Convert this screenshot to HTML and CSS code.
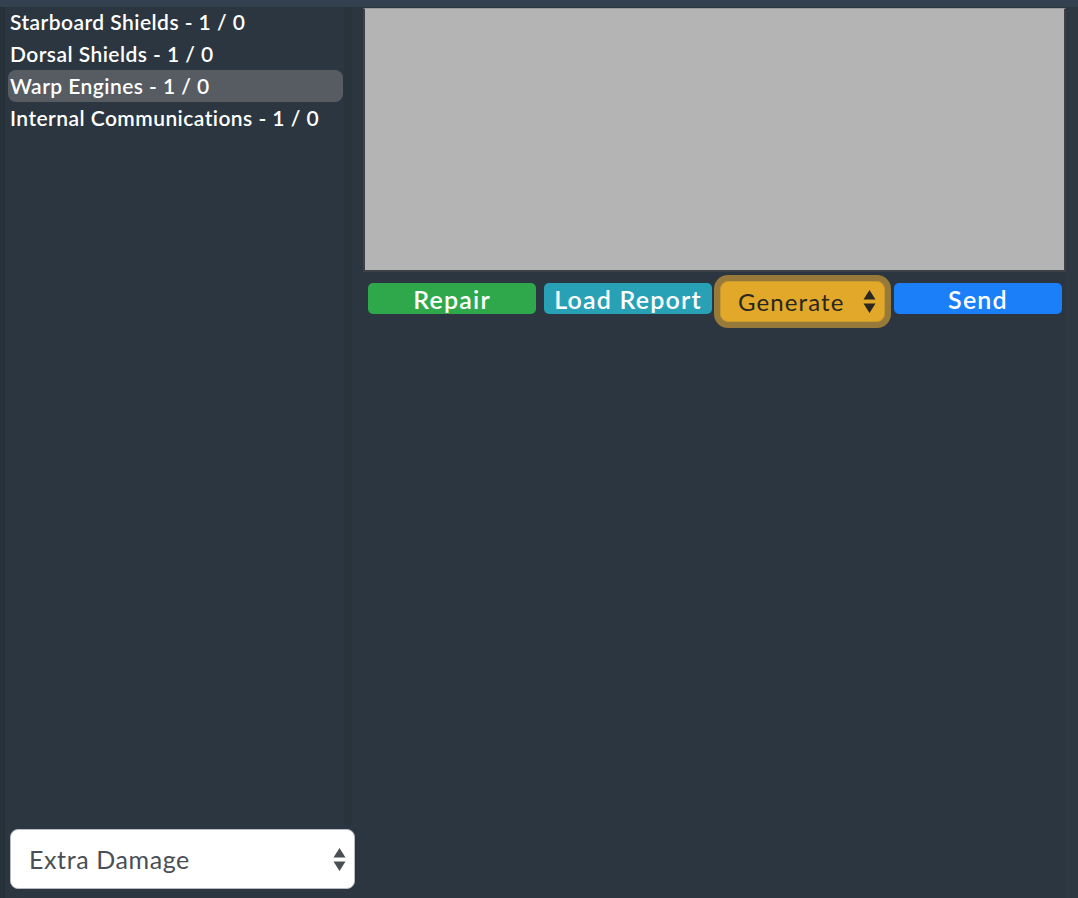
FILE: index.html
```html
<!DOCTYPE html>
<html>
<head>
<meta charset="utf-8">
<link rel="stylesheet" href="styles.css">
</head>
<body>
<div class="topbar"></div>
<div class="main">
  <aside class="sidebar">
    <div class="list-wrap">
      <ul class="systems">
        <li>Starboard Shields - 1 / 0</li>
        <li>Dorsal Shields - 1 / 0</li>
        <li class="active">Warp Engines - 1 / 0</li>
        <li>Internal Communications - 1 / 0</li>
      </ul>
      <div class="track"></div>
    </div>
    <div class="select-box">
      <span>Extra Damage</span>
      <svg class="updown" width="13" height="25" viewBox="0 0 13 25"><path d="M6.5 1 L12.5 10.5 L0.5 10.5 Z M6.5 24 L12.5 14.5 L0.5 14.5 Z" fill="#4a4f55"/></svg>
    </div>
  </aside>
  <section class="content">
    <div class="report"></div>
    <div class="actions">
      <div class="cell"><button class="btn green">Repair</button></div>
      <div class="cell"><button class="btn teal">Load Report</button></div>
      <div class="cell gen-cell">
        <div class="gen">
          <span>Generate</span>
          <svg width="13" height="25" viewBox="0 0 13 25"><path d="M6.5 1 L12.5 10.5 L0.5 10.5 Z M6.5 24 L12.5 14.5 L0.5 14.5 Z" fill="#2a2620"/></svg>
        </div>
      </div>
      <div class="cell"><button class="btn blue">Send</button></div>
    </div>
  </section>
  <div class="edge"></div>
</div>
</body>
</html>
```
FILE: styles.css
```css
html, body {
  margin: 0;
  padding: 0;
  height: 100%;
}
body {
  background: #2b3640;
  font-family: "Lato", "Open Sans", sans-serif;
  overflow: hidden;
}
.topbar {
  height: 7px;
  background: #334050;
}
.main {
  display: flex;
  height: 891px;
}
.sidebar {
  width: 357px;
  flex: none;
  display: flex;
  flex-direction: column;
  border-left: 5px solid #273139;
  box-sizing: border-box;
}
.list-wrap {
  flex: 1;
  display: flex;
  min-height: 0;
}
.systems {
  list-style: none;
  margin: -1px 0 0 0;
  padding: 0 0 0 3px;
  flex: 1;
}
.systems li {
  color: #ffffff;
  font-size: 21px;
  font-weight: 600;
  letter-spacing: 0.45px;
  height: 32px;
  line-height: 31px;
  padding-left: 2px;
  border-radius: 8px;
  white-space: nowrap;
}
.systems li.active {
  background: #575c63;
}
.track {
  width: 8px;
  margin: 0 5px 4px 1px;
  background: #28333c;
  border-radius: 0 0 5px 5px;
}
.select-box {
  margin: 0 0 9px 5px;
  height: 60px;
  width: 345px;
  box-sizing: border-box;
  background: #ffffff;
  border: 1px solid #b8bcc2;
  border-radius: 8px;
  display: flex;
  align-items: center;
  justify-content: space-between;
  padding: 0 8px 0 18px;
  color: #4a4f55;
  font-size: 25px;
  letter-spacing: 0.6px;
}
.content {
  width: 709px;
  flex: none;
  padding: 1px 0 0 6px;
  box-sizing: border-box;
}
.report {
  height: 264px;
  background: #b4b4b4;
  border: 2px solid #3d4146;
  border-top-color: #9e9a98;
  border-top-width: 1px;
  box-sizing: border-box;
}
.actions {
  display: grid;
  grid-template-columns: repeat(4, 175px);
  align-items: start;
  margin-top: 5px;
  padding-left: 2px;
}
.cell {
  padding: 6px 3px 0 4px;
}
.cell:first-child { padding-left: 3px; }
.btn {
  display: block;
  width: 168px;
  height: 31px;
  border: none;
  border-radius: 5px;
  color: #ffffff;
  font-family: inherit;
  font-size: 25px;
  font-weight: 600;
  letter-spacing: 1.2px;
  padding: 0;
  line-height: 30px;
}
.green { background: #2ea84a; }
.teal { background: #28a1b7; }
.blue { background: #1a7ff8; }
.gen-cell {
  padding: 4px 0 0 5px;
}
.gen {
  width: 165px;
  height: 41px;
  box-sizing: border-box;
  border: 1px solid #c99a2a;
  border-radius: 8px;
  background: #e2a82a;
  box-shadow: 0 0 0 6px #97793a;
  display: flex;
  align-items: center;
  justify-content: space-between;
  padding: 0 8px 0 17px;
  color: #2a2620;
  font-size: 24px;
  letter-spacing: 1.1px;
}
.edge {
  flex: 1;
  border-left: 4px solid #2f3840;
  background: #2d3843;
}
```
